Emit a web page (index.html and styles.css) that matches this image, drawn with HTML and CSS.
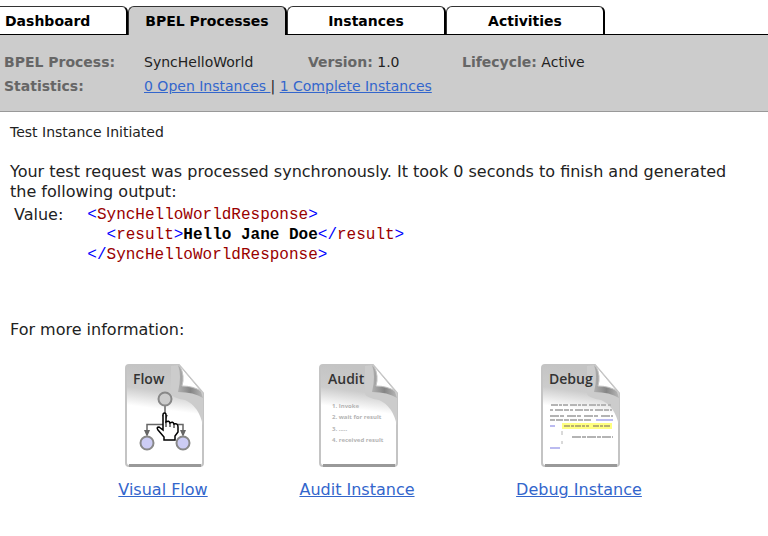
FILE: index.html
```html
<!DOCTYPE html>
<html lang="en">
<head>
    <meta charset="UTF-8">
    <meta name="viewport" content="width=device-width, initial-scale=1.0">
    <title>BPEL Processes</title>
    <link rel="stylesheet" href="styles.css">
</head>
<body>
    <nav class="tabs">
        <a class="tab first" href="#dashboard">Dashboard</a>
        <a class="tab active" href="#processes">BPEL Processes</a>
        <a class="tab" href="#instances">Instances</a>
        <a class="tab" href="#activities">Activities</a>
    </nav>

    <header class="process-info">
        <div class="info-row">
            <b class="info-label">BPEL Process:</b>
            <span class="info-name">SyncHelloWorld</span>
            <span class="info-version"><b>Version:</b> 1.0</span>
            <span><b>Lifecycle:</b> Active</span>
        </div>
        <div class="info-row">
            <b class="info-label">Statistics:</b>
            <span><a href="#open">0 Open Instances </a> | <a href="#complete">1 Complete Instances</a></span>
        </div>
    </header>

    <main class="content">
        <h1>Test Instance Initiated</h1>
        <p class="message">Your test request was processed synchronously. It took 0 seconds to finish and generated the following output:</p>
        <div class="output">
            <span>Value:</span>
<pre><i>&lt;</i>SyncHelloWorldResponse<i>&gt;</i>
  <i>&lt;</i>result<i>&gt;</i><b>Hello Jane Doe</b><i>&lt;/</i>result<i>&gt;</i>
<i>&lt;/</i>SyncHelloWorldResponse<i>&gt;</i></pre>
        </div>

        <p class="more">For more information:</p>
        <div class="links">
            <a class="doc-link" href="#flow">
                <svg class="doc" viewBox="0 0 80 104" width="80" height="104">
                    <defs>
                        <linearGradient id="paper" x1="0.1" y1="0" x2="0" y2="1">
                            <stop offset="0" stop-color="#c4c4c4"/>
                            <stop offset="0.22" stop-color="#cccccc"/>
                            <stop offset="0.4" stop-color="#ffffff"/>
                        </linearGradient>
                        <linearGradient id="fold" x1="0" y1="0.5" x2="1" y2="0.5">
                            <stop offset="0" stop-color="#b0b0b0"/>
                            <stop offset="0.5" stop-color="#858585"/>
                            <stop offset="1" stop-color="#b8b8b8"/>
                        </linearGradient>
                        <g id="sheet">
                            <path d="M4 1H54L78 29V99Q78 102 75 102H4Q1 102 1 99V4Q1 1 4 1Z" fill="url(#paper)" stroke="#c4c4c4" stroke-width="2"/>
                            <path d="M46 2L54 1L78 29V62Q74 42 60 36Q48 34 46 30Z" fill="#cccccc"/>
                            <path d="M53 1Q57 12 53 28Q69 28 78 34L76 28Z" fill="url(#fold)"/>
                            <path d="M55 2Q60 12 57 22Q68 22 76 27Z" fill="#ffffff" stroke="#c4c4c4"/>
                            <path d="M4 101.500H76" stroke="#999999" stroke-width="3"/>
                        </g>
                    </defs>
                    <use href="#sheet"/>
                    <text class="doc-title" x="8" y="20">Flow</text>
                    <path d="M40 42V58M22 71V60.500H58V71" fill="none" stroke="#666666" stroke-width="1.500"/>
                    <path d="M37 51H43L40 57ZM19 66H25L22 73ZM55 66H61L58 73Z" fill="#666666"/>
                    <circle cx="40" cy="35" r="6.500" fill="#cccccc" stroke="#888888" stroke-width="2"/>
                    <circle cx="22" cy="79" r="6.500" fill="#ccccf4" stroke="#888888" stroke-width="2"/>
                    <circle cx="58" cy="79" r="6.500" fill="#ccccf4" stroke="#888888" stroke-width="2"/>
                    <path d="M38 51Q38 49 39.500 49Q41 49 41 51V58Q44 56 45 59Q48 57 49 60Q53 59 53 63V68L50 72V76H39V73L33 66Q31 63 34 63L38 66Z" fill="#ffffff" stroke="#000000" stroke-width="1.500"/>
                    <path d="M41 57V63M45 58V63M49 60V64" stroke="#000000"/>
                </svg>
                <span>Visual Flow</span>
            </a>
            <a class="doc-link" href="#audit">
                <svg class="doc" viewBox="0 0 80 104" width="80" height="104">
                    <use href="#sheet"/>
                    <text class="doc-title" x="9" y="20">Audit</text>
                    <g class="doc-text">
                        <text x="13" y="44">1. Invoke</text>
                        <text x="13" y="55">2. wait for result</text>
                        <text x="13" y="67">3. .....</text>
                        <text x="13" y="78">4. received result</text>
                    </g>
                </svg>
                <span>Audit Instance</span>
            </a>
            <a class="doc-link" href="#debug">
                <svg class="doc" viewBox="0 0 80 104" width="80" height="104">
                    <use href="#sheet"/>
                    <text class="doc-title" x="8" y="20">Debug</text>
                    <path d="M21 59H71V65H21Z" fill="#ffff80"/>
                    <g fill="none" stroke="#b4b4b4" stroke-width="2">
                        <path d="M10 41H70" stroke-dasharray="7 1 3 1 5 2"/>
                        <path d="M9 46H71" stroke-dasharray="3 2 8 1 5 1"/>
                        <path d="M9 52H72" stroke-dasharray="9 1 4 3"/>
                        <path d="M9 56H51" stroke-dasharray="5 1 7 1"/>
                        <path d="M55 56H72M9 62H14M9 84H19" stroke="#bbbbf0"/>
                        <path d="M23 62H48M52 62H69" stroke="#b8b070" stroke-dasharray="6 1 3 1"/>
                        <path d="M31 73H72" stroke-dasharray="9 1 4 1"/>
                        <path d="M21 67V71M21 77V80" stroke-width="1"/>
                    </g>
                </svg>
                <span>Debug Instance</span>
            </a>
        </div>
    </main>
</body>
</html>
```

FILE: styles.css
```css
body {
    font-family: "DejaVu Sans", Verdana, sans-serif;
    margin: 0;
    font-size: 16px;
    line-height: 20px;
    color: #222;
    background-color: #fff;
}

a {
    color: #36c;
}

.tabs {
    display: flex;
    padding-top: 6px;
    border-bottom: 1px solid #000;
}

.tab {
    box-sizing: border-box;
    width: 159px;
    height: 28px;
    border: 1px solid #333;
    border-right: 2px solid #000;
    border-bottom: 0;
    border-radius: 6px 6px 0 0;
    background-color: #fff;
    color: #000;
    font-size: 14px;
    font-weight: bold;
    line-height: 28px;
    text-align: center;
    text-decoration: none;
}

.tab.first {
    width: 128px;
    padding-left: 5px;
    border-left: 0;
    border-top-left-radius: 0;
    text-align: left;
}

.tab.active {
    height: 29px;
    margin-bottom: -1px;
    background-color: #ccc;
}

.process-info {
    padding: 15px 4px 13px;
    border-bottom: 1px solid #999;
    background-color: #ccc;
    font-size: 14px;
    line-height: 24px;
}

.process-info b {
    color: #666;
}

.info-row {
    display: flex;
}

.info-label {
    width: 140px;
}

.info-name {
    width: 164px;
}

.info-version {
    width: 154px;
}

.content {
    padding: 10px;
}

.content h1 {
    margin: 0 0 20px;
    font-size: 14px;
    font-weight: normal;
}

.message {
    margin: 0;
    padding-right: 16px;
}

.output {
    display: flex;
    gap: 24px;
    margin: 3px 4px 0;
}

pre {
    margin: 0;
    font-family: "Liberation Mono", "Courier New", monospace;
    font-size: 16px;
    color: #900;
}

pre i {
    font-style: normal;
    color: #00f;
}

pre b {
    color: #000;
}

.more {
    margin: 55px 0 24px;
}

.links {
    display: grid;
    grid-template-columns: 194fr 194fr 250fr;
    padding: 0 54px 0 56px;
}

.doc-link {
    display: flex;
    flex-direction: column;
    align-items: center;
    gap: 12px;
}

.doc {
    margin-left: 4px;
}

.doc-title {
    font-family: "Open Sans", sans-serif;
    font-size: 14px;
    font-weight: 600;
    fill: #333;
}

.doc-text {
    font-family: "Open Sans", sans-serif;
    font-size: 6px;
    font-weight: bold;
    fill: #b4b4b4;
}
```
